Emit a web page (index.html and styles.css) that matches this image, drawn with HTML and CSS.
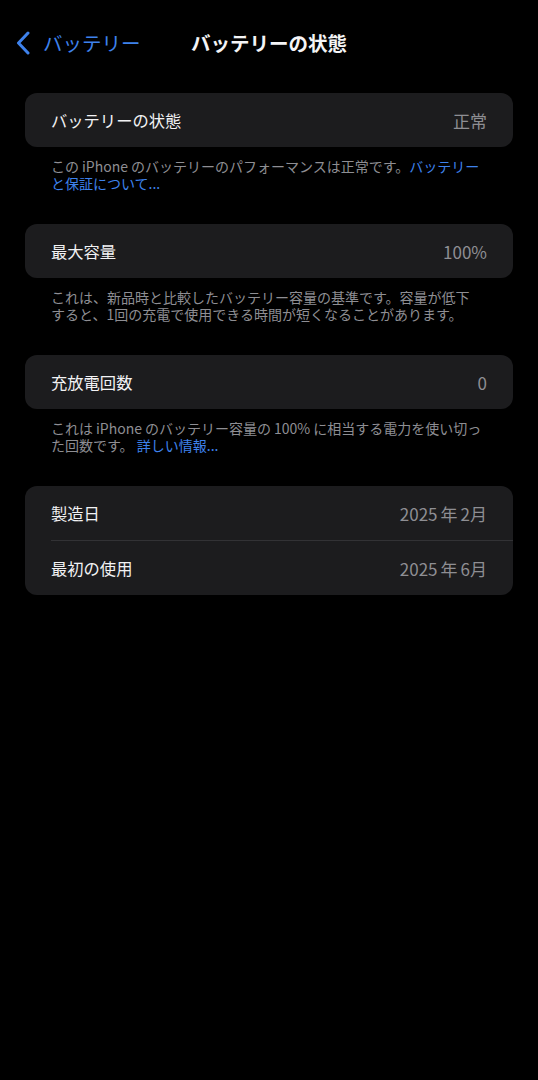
FILE: index.html
```html
<!DOCTYPE html>
<html lang="ja">
<head>
<meta charset="utf-8">
<title>バッテリーの状態</title>
<link rel="stylesheet" href="styles.css">
</head>
<body>
<header class="nav">
  <a class="back">
    <svg class="chev" width="14" height="24" viewBox="0 0 14 24"><polyline points="12,2 2.5,12 12,22" fill="none" stroke="currentColor" stroke-width="3" stroke-linecap="round" stroke-linejoin="round"/></svg>
    <span>バッテリー</span>
  </a>
  <h1 class="title">バッテリーの状態</h1>
  <span></span>
</header>
<main class="content">
  <section class="group">
    <div class="card">
      <div class="row"><span class="label">バッテリーの状態</span><span class="value">正常</span></div>
    </div>
    <p class="foot">この<span class="lat">iPhone</span>のバッテリーのパフォーマンスは正常です。<a class="link">バッテリー<br>と保証について...</a></p>
  </section>
  <section class="group">
    <div class="card">
      <div class="row"><span class="label">最大容量</span><span class="value">100%</span></div>
    </div>
    <p class="foot">これは、新品時と比較したバッテリー容量の基準です。容量が低下<br>すると、1回の充電で使用できる時間が短くなることがあります。</p>
  </section>
  <section class="group">
    <div class="card">
      <div class="row"><span class="label">充放電回数</span><span class="value">0</span></div>
    </div>
    <p class="foot">これは<span class="lat">iPhone</span>のバッテリー容量の<span class="lat">100%</span>に相当する電力を使い切っ<br>た回数です。 <a class="link">詳しい情報...</a></p>
  </section>
  <section class="group">
    <div class="card">
      <div class="row"><span class="label">製造日</span><span class="value">2025<span class="lat">年</span>2月</span></div>
      <div class="row"><span class="label">最初の使用</span><span class="value">2025<span class="lat">年</span>6月</span></div>
    </div>
  </section>
</main>
</body>
</html>
```

FILE: styles.css
```css
* { box-sizing: border-box; }
html, body {
  margin: 0;
  padding: 0;
  background: #000;
}
body {
  width: 538px;
  min-height: 1080px;
  font-family: "Noto Sans CJK JP", "Noto Sans", sans-serif;
  color: #f2f2f4;
}
.nav {
  display: grid;
  grid-template-columns: 1fr auto 1fr;
  align-items: center;
  height: 30px;
  margin-top: 28px;
}
.back {
  display: flex;
  align-items: center;
  gap: 13px;
  padding-left: 16px;
  color: #3e82ec;
  font-size: 19.5px;
  line-height: 30px;
}
.chev { display: block; }
.title {
  margin: 0;
  font-size: 19.5px;
  font-weight: 700;
  line-height: 30px;
  color: #f4f4f6;
}
.content {
  padding: 35px 25px 0 25px;
}
.group { margin-bottom: 32px; }
.card {
  background: #1c1c1e;
  border-radius: 12px;
  overflow: hidden;
}
.row {
  display: flex;
  justify-content: space-between;
  align-items: center;
  height: 54px;
  padding: 0 26px;
  font-size: 16.3px;
  position: relative;
}
.row + .row {
  height: 55px;
  padding-top: 1px;
}
.row + .row::before {
  content: "";
  position: absolute;
  left: 26px;
  right: 0;
  top: 0;
  height: 1px;
  background: #323235;
}
.label { color: #f2f2f4; }
.value { color: #8e8e93; font-size: 17px; }
.foot {
  margin: 0;
  padding: 11px 26px 0 26px;
  font-size: 14px;
  line-height: 17px;
  color: #8e8e93;
  white-space: nowrap;
}
.lat { margin: 0 3px; }
.link { color: #3e82ec; }
```
